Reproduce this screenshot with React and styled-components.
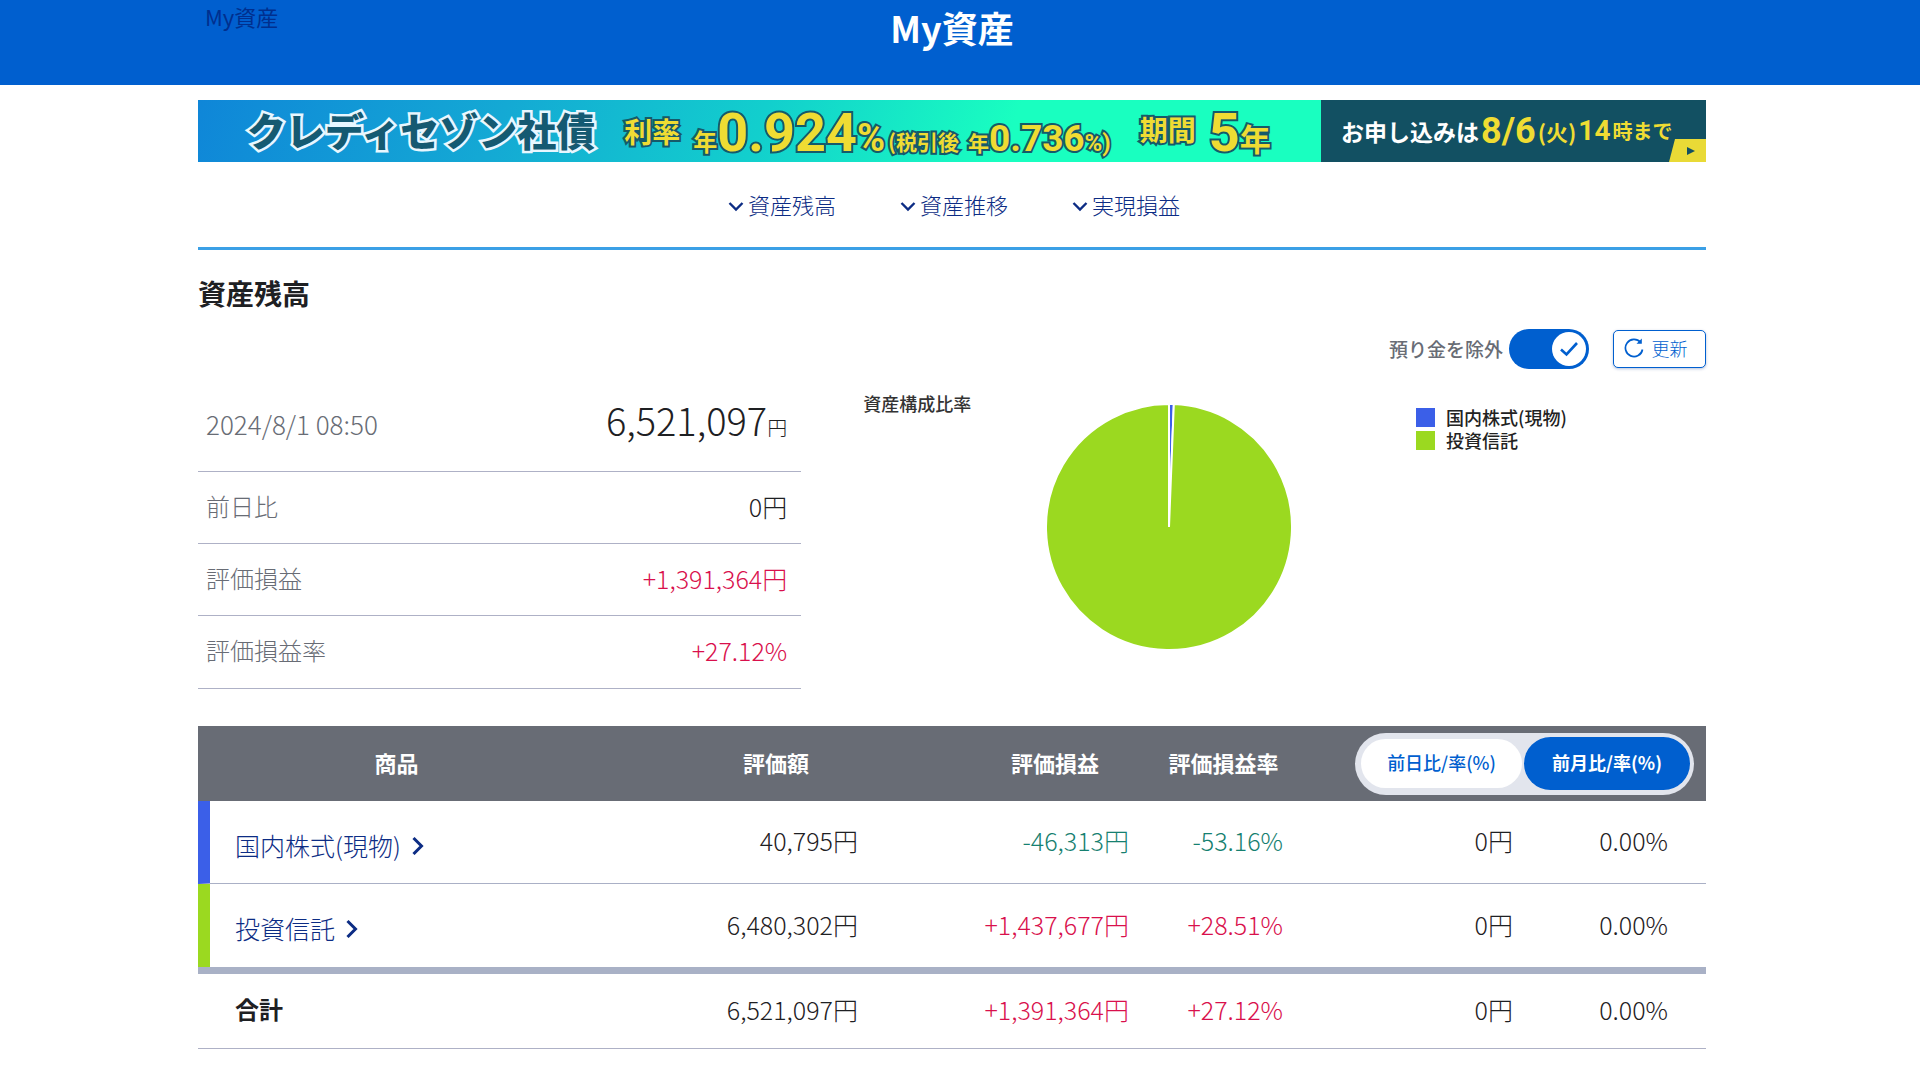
import React, { useState } from "react";
import styled, { createGlobalStyle } from "styled-components";

const GlobalStyle = createGlobalStyle`
  * {
    box-sizing: border-box;
  }

  body {
    margin: 0;
    background: #fff;
    color: #1e2023;
    font-family: "Noto Sans CJK JP", "Noto Sans", sans-serif;
    font-size: 25px;
    font-weight: 300;
    line-height: 36px;
    overflow-x: hidden;
  }

  button {
    font-family: inherit;
    cursor: pointer;
  }

  a {
    color: #0c2c84;
    text-decoration: none;
  }
`;

const Header = styled.header`
  background: #005fcf;
  height: 85px;
`;

const Inner = styled.div`
  max-width: 1524px;
  margin: 0 auto;
  padding-right: 16px;
`;

const HeaderInner = styled(Inner)`
  display: grid;
  grid-template-columns: 1fr auto 1fr;
  align-items: start;
`;

const Crumb = styled.a`
  padding: 0 7px;
  color: #002f8e;
  font-size: 22px;
  line-height: 32px;
  font-weight: 400;
`;

const PageTitle = styled.h1`
  margin: 0;
  color: #fff;
  font-size: 36px;
  line-height: 54px;
  font-weight: 700;
`;

const Banner = styled.a`
  display: flex;
  height: 62px;
  margin-top: 15px;
  white-space: nowrap;
  font-weight: 700;
  line-height: 58px;
  color: #efdc33;
`;

const Offer = styled.span`
  flex: 1;
  display: flex;
  padding-left: 49px;
  background: linear-gradient(110deg, #0f86d8 0%, #14a9d4 27%, #12cfcd 50%, #19ffc0 72%, #19ffc0 100%);
`;

const BannerText = styled.span`
  font-size: ${(p) => p.$size}px;
  font-weight: ${(p) => p.$weight || 700};
  margin-left: ${(p) => p.$gap || 0}px;
  padding-top: ${(p) => p.$drop || 0}px;
  color: ${(p) => p.$color || "#efdc33"};
  -webkit-text-stroke: ${(p) => p.$stroke || "4px #155a6a"};
  paint-order: stroke fill;
  stroke-linejoin: round;
`;

const Digits = styled.span`
  font-family: Roboto, "Liberation Sans", sans-serif;
  font-size: ${(p) => p.$size}px;
  font-weight: 700;
`;

const Deadline = styled.span`
  display: flex;
  justify-content: space-between;
  width: 385px;
  padding-left: 20px;
  background: #125062;
`;

const DeadlineText = styled.span`
  display: flex;
  gap: 2px;
  padding-top: 2px;
  font-size: 20px;
`;

const White = styled.span`
  color: #fff;
  font-size: 23px;
`;

const Weekday = styled.span`
  font-size: 22px;
`;

const Corner = styled.svg`
  align-self: flex-end;
  flex: none;
  margin-left: -8px;
`;

const AnchorNav = styled.nav`
  display: flex;
  justify-content: center;
  gap: 64px;
  padding: 24px 0 25px 4px;
  border-bottom: 3px solid #3ba0e6;

  svg {
    margin-top: 4px;
  }
`;

const AnchorLink = styled.a`
  display: flex;
  align-items: center;
  gap: 4px;
  font-size: 22px;
`;

const SectionTitle = styled.h2`
  margin: 23px 0 0;
  font-size: 28px;
  line-height: 40px;
  font-weight: 700;
`;

const Controls = styled.div`
  display: flex;
  justify-content: flex-end;
  align-items: center;
  height: 40px;
  margin-top: 16px;
`;

const ToggleLabel = styled.label`
  display: flex;
  align-items: center;
  gap: 6px;
  color: #686c75;
  font-size: 19px;
  font-weight: 500;
`;

const Toggle = styled.input`
  appearance: none;
  width: 80px;
  height: 40px;
  margin: 0;
  border-radius: 20px;
  cursor: pointer;
  background: ${(p) => (p.checked ? "#005fcf" : "#a9b1c6")};
`;

const ToggleBox = styled.span`
  position: relative;
  display: flex;
`;

const Knob = styled.svg`
  position: absolute;
  top: 3px;
  left: ${(p) => (p.$on ? 43 : 3)}px;
  pointer-events: none;
`;

const RefreshButton = styled.button`
  display: flex;
  align-items: center;
  justify-content: center;
  gap: 8px;
  width: 93px;
  height: 38px;
  margin-left: 24px;
  padding: 0 8px 2px 0;
  border: 1px solid #005fcf;
  border-radius: 5px;
  background: #fff;
  box-shadow: 0 1px 3px rgba(0, 50, 140, 0.3);
  color: #005fcf;
  font-size: 18px;
  font-weight: 300;
`;

const Overview = styled.div`
  display: grid;
  grid-template-columns: 40% 1fr auto;
  padding-top: 8px;
`;

const SummaryTable = styled.table`
  width: 100%;
  border-collapse: separate;
  border-spacing: 0;

  th,
  td {
    height: 72px;
    padding: 0 14px 4px 8px;
    border-bottom: 1px solid #aeb1c6;
    font-weight: 300;
  }

  th {
    color: #686c75;
    text-align: left;
    font-size: 24px;
  }

  td {
    text-align: right;
  }

  tr:first-child th,
  tr:first-child td {
    height: 95px;
    padding-bottom: 0;
    font-size: 26px;
  }

  tr:last-child th,
  tr:last-child td {
    height: 73px;
  }
`;

const tones = { plus: "#d9104c", minus: "#168070", none: "#1e2023" };

const Amount = styled.span`
  color: ${(p) => tones[p.$tone || "none"]};
`;

const Total = styled.span`
  font-size: 38px;
`;

const Unit = styled.span`
  font-size: 20px;
`;

const ChartArea = styled.figure`
  display: flex;
  gap: 75px;
  margin: 0;
  padding: 10px 0 0 62px;
`;

const ChartTitle = styled.figcaption`
  color: #333;
  font-size: 18px;
  line-height: 32px;
  font-weight: 500;
`;

const Pie = styled.svg`
  flex: none;
  margin-top: 17px;
`;

const Legend = styled.ul`
  width: 290px;
  margin: 0;
  padding: 29px 0 0;
  list-style: none;
  color: #222;
  font-size: 18px;
  line-height: 23px;
  font-weight: 500;
`;

const LegendItem = styled.li`
  display: flex;
  align-items: center;
  gap: 11px;

  &::before {
    content: "";
    width: 19px;
    height: 19px;
    background: ${(p) => p.$color};
  }
`;

const ProductTable = styled.table`
  width: 100%;
  margin-top: 37px;
  border-collapse: separate;
  border-spacing: 0;
  table-layout: fixed;

  thead th {
    height: 75px;
    padding: 0 0 4px;
    background: #686c75;
    color: #fff;
    font-size: 22px;
    font-weight: 700;
  }

  thead th:last-child {
    padding: 0;
  }

  tbody td,
  tfoot td {
    text-align: right;
  }
`;

const Col = styled.col`
  width: ${(p) => p.$width};
`;

const Row = styled.tr`
  height: 83px;

  th {
    padding: 5px 0 0 25px;
    border-left: 12px solid ${(p) => p.$color};
    text-align: left;
    font-weight: 300;
  }

  td {
    padding: 0 0 4px;
  }

  &:not(:last-child) td,
  &:not(:last-child) th {
    border-bottom: 1px solid #aab0c6;
  }
`;

const TotalRow = styled.tr`
  height: 82px;

  th,
  td {
    padding: 0 0 4px;
    border-top: 7px solid #a9b1c6;
    border-bottom: 1px solid #aeb1c6;
  }

  th {
    padding-left: 37px;
    text-align: left;
    font-size: 24px;
    font-weight: 700;
  }
`;

const Cell = styled.td`
  && {
    padding-right: ${(p) => p.$pad}px;
  }
`;

const ProductLink = styled.a`
  display: inline-flex;
  align-items: center;
  gap: 10px;
`;

const Segments = styled.div`
  display: flex;
  gap: 2px;
  width: 339px;
  height: 62px;
  margin: 0 12px 0 auto;
  padding: 4px 4px 5px 6px;
  border-radius: 31px;
  background: #e2e5ed;
`;

const Segment = styled.button`
  flex: ${(p) => (p.$active ? "0 0 166px" : "1")};
  padding: 0 0 2px;
  border: 0;
  border-radius: 27px;
  background: ${(p) => (p.$active ? "#005fcf" : "#fff")};
  color: ${(p) => (p.$active ? "#fff" : "#005fcf")};
  margin: ${(p) => (p.$active ? "0" : "2px 0")};
  font-size: 18px;
  font-weight: ${(p) => (p.$active ? 700 : 500)};
`;

const products = [
  {
    name: "国内株式(現物)",
    color: "#3b5fe8",
    value: 40795,
    tone: "minus",
    cells: ["40,795円", "-46,313円", "-53.16%", "0円", "0.00%"],
  },
  {
    name: "投資信託",
    color: "#9bd920",
    value: 6480302,
    tone: "plus",
    cells: ["6,480,302円", "+1,437,677円", "+28.51%", "0円", "0.00%"],
  },
];

const totals = ["6,521,097円", "+1,391,364円", "+27.12%", "0円", "0.00%"];
const cellPads = [99, 24, 11, 0, 38];

function Chevron({ down }) {
  return down ? (
    <svg width="16" height="12" viewBox="0 0 16 12" fill="none" stroke="#0c2c84" strokeWidth="2.4">
      <path d="M1.5 3l6.5 6.5L14.5 3" />
    </svg>
  ) : (
    <svg width="14" height="20" viewBox="0 0 14 20" fill="none" stroke="#0c2c84" strokeWidth="3">
      <path d="M2.5 3l8 8-8 8" />
    </svg>
  );
}

function PieChart() {
  const r = 123;
  const sum = products.reduce((a, p) => a + p.value, 0);
  let angle = 0;
  const point = (a) => `${r + r * Math.sin(a)} ${r - r * Math.cos(a)}`;

  return (
    <Pie width="246" height="246" viewBox="0 0 246 246" role="img" aria-label="資産構成比率">
      {products.map((p) => {
        const start = angle;
        const size = (p.value / sum) * Math.PI * 2;
        angle += size;
        return (
          <path
            key={p.name}
            d={`M${r} ${r}L${point(start)}A${r} ${r} 0 ${size > Math.PI ? 1 : 0} 1 ${point(angle)}Z`}
            fill={p.color}
            stroke="#fff"
            strokeWidth="2"
            strokeLinejoin="bevel"
          />
        );
      })}
    </Pie>
  );
}

function Cells({ values, tone }) {
  return values.map((v, i) => (
    <Cell key={i} $pad={cellPads[i]}>
      <Amount $tone={i === 1 || i === 2 ? tone : "none"}>{v}</Amount>
    </Cell>
  ));
}

export default function App() {
  const [exclude, setExclude] = useState(true);
  const [period, setPeriod] = useState("month");

  return (
    <>
      <GlobalStyle />
      <Header>
        <HeaderInner>
          <Crumb href="#top">My資産</Crumb>
          <PageTitle>My資産</PageTitle>
        </HeaderInner>
      </Header>

      <Inner as="main">
        <Banner href="#bond">
          <Offer>
            <BannerText $size={39} $weight={900} $color="#155a72" $stroke="5px #e8f7ff">
              クレディセゾン社債
            </BannerText>
            <BannerText $size={28} $gap={29} $drop={2}>利率</BannerText>
            <BannerText $size={24} $gap={13} $drop={4}>
              年<Digits $size={54}>0.924</Digits>
              <Digits $size={38}>%</Digits>
            </BannerText>
            <BannerText $size={21} $gap={3} $drop={12}>
              (税引後
            </BannerText>
            <BannerText $size={21} $gap={9} $drop={10}>
              年<Digits $size={37}>0.736</Digits>
              <Digits $size={24}>%)</Digits>
            </BannerText>
            <BannerText $size={28} $gap={29}>期間</BannerText>
            <BannerText $size={31} $gap={13} $drop={4}>
              <Digits $size={54}>5</Digits>年
            </BannerText>
          </Offer>
          <Deadline>
            <DeadlineText>
              <White>お申し込みは</White>
              <Digits $size={36}>8/6</Digits>
              <Weekday>(火)</Weekday>
              <Digits $size={28}>14</Digits>
              <span>時まで</span>
            </DeadlineText>
            <Corner width="37" height="23" viewBox="0 0 37 23">
              <path d="M6 0H37V23H0Z" fill="#e9da36" />
              <path d="M18 8l8 4-8 4z" fill="#125062" />
            </Corner>
          </Deadline>
        </Banner>

        <AnchorNav>
          {["資産残高", "資産推移", "実現損益"].map((label) => (
            <AnchorLink key={label} href={`#${label}`}>
              <Chevron down />
              {label}
            </AnchorLink>
          ))}
        </AnchorNav>

        <SectionTitle id="資産残高">資産残高</SectionTitle>

        <Controls>
          <ToggleLabel>
            預り金を除外
            <ToggleBox>
              <Toggle type="checkbox" checked={exclude} onChange={(e) => setExclude(e.target.checked)} />
              <Knob $on={exclude} width="34" height="34" viewBox="0 0 34 34">
                <circle cx="17" cy="17" r="17" fill="#fff" />
                <path d="M9 17.5l5.5 5L25 11" fill="none" stroke="#005fcf" strokeWidth="2.6" />
              </Knob>
            </ToggleBox>
          </ToggleLabel>
          <RefreshButton type="button">
            <svg width="20" height="20" viewBox="0 0 20 20" fill="none" stroke="#005fcf" strokeWidth="1.7">
              <path d="M18.5 11.5A8.6 8.6 0 1 1 16.5 4.3" />
              <path d="M17.8 0.5V5.8H12.5Z" fill="#005fcf" stroke="none" />
            </svg>
            更新
          </RefreshButton>
        </Controls>

        <Overview>
          <SummaryTable>
            <tbody>
              <tr>
                <th scope="row">2024/8/1 08:50</th>
                <td>
                  <Total>6,521,097</Total>
                  <Unit>円</Unit>
                </td>
              </tr>
              <tr>
                <th scope="row">前日比</th>
                <td>0円</td>
              </tr>
              <tr>
                <th scope="row">評価損益</th>
                <td>
                  <Amount $tone="plus">+1,391,364円</Amount>
                </td>
              </tr>
              <tr>
                <th scope="row">評価損益率</th>
                <td>
                  <Amount $tone="plus">+27.12%</Amount>
                </td>
              </tr>
            </tbody>
          </SummaryTable>
          <ChartArea>
            <ChartTitle>資産構成比率</ChartTitle>
            <PieChart />
          </ChartArea>
          <Legend>
            {products.map((p) => (
              <LegendItem key={p.name} $color={p.color}>
                {p.name}
              </LegendItem>
            ))}
          </Legend>
        </Overview>

        <ProductTable>
          <colgroup>
            <Col />
            <Col $width="24%" />
            <Col $width="13%" />
            <Col $width="141px" />
            <Col $width="219px" />
            <Col $width="193px" />
          </colgroup>
          <thead>
            <tr>
              <th>商品</th>
              <th>評価額</th>
              <th>評価損益</th>
              <th>評価損益率</th>
              <th colSpan={2}>
                <Segments>
                  <Segment type="button" $active={period === "day"} onClick={() => setPeriod("day")}>
                    前日比/率(%)
                  </Segment>
                  <Segment type="button" $active={period === "month"} onClick={() => setPeriod("month")}>
                    前月比/率(%)
                  </Segment>
                </Segments>
              </th>
            </tr>
          </thead>
          <tbody>
            {products.map((p) => (
              <Row key={p.name} $color={p.color}>
                <th scope="row">
                  <ProductLink href={`#${p.name}`}>
                    {p.name}
                    <Chevron />
                  </ProductLink>
                </th>
                <Cells values={p.cells} tone={p.tone} />
              </Row>
            ))}
          </tbody>
          <tfoot>
            <TotalRow>
              <th scope="row">合計</th>
              <Cells values={totals} tone="plus" />
            </TotalRow>
          </tfoot>
        </ProductTable>
      </Inner>
    </>
  );
}
